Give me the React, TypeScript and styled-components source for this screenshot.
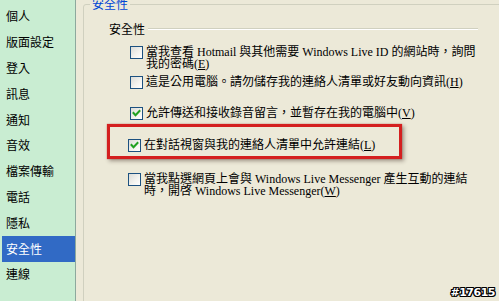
import React from "react";
import styled, { createGlobalStyle } from "styled-components";

const Global = createGlobalStyle`
  html, body { margin: 0; padding: 0; }
  body {
    background: #ece9d8;
    font-family: "Liberation Serif", "Noto Sans CJK TC", serif;
    font-size: 12px;
    overflow: hidden;
  }
`;

const Page = styled.div`
  position: relative;
  display: flex;
  width: 499px;
  height: 301px;
  overflow: hidden;
  background: #ece9d8;
`;

const Sidebar = styled.nav`
  flex: 0 0 auto;
  width: 76px;
  height: 100%;
  box-sizing: border-box;
  background: #c9edd2;
  border-right: 1px solid #8da99d;
  padding: 3.6px 0 0 2px;
  display: flex;
  flex-direction: column;
`;

const NavItem = styled.div<{ $active?: boolean }>`
  height: 25.8px;
  margin-right: 0px;
  padding-left: 4px;
  display: flex;
  align-items: center;
  font-family: "Noto Sans CJK TC", sans-serif;
  font-size: 12px;
  line-height: 12px;
  color: ${(p) => (p.$active ? "#ffffff" : "#000000")};
  background: ${(p) => (p.$active ? "#316ac5" : "transparent")};
`;

const Main = styled.main`
  flex: 1 1 auto;
  padding-left: 7px;
  min-width: 0;
`;

const GroupBox = styled.fieldset`
  margin: -3px -30px 0 0;
  padding: 0;
  border: 1px solid #d0d0bf;
  border-radius: 3px;
  height: 320px;
  box-sizing: border-box;
`;

const Legend = styled.legend`
  margin-left: 6px;
  padding: 0 2px;
  font-family: "Noto Sans CJK TC", sans-serif;
  font-size: 12px;
  line-height: 14px;
  color: #0046d5;
`;

const Heading = styled.div`
  display: flex;
  align-items: center;
  margin: 11px 0 0 25px;
  width: 369px;
  font-family: "Noto Sans CJK TC", sans-serif;
  font-size: 12px;
  line-height: 14px;
  color: #000;
`;

const Rule = styled.span`
  flex: 1;
  height: 0;
  margin-left: 3px;
  border-top: 1px solid #d0d0bf;
  border-bottom: 1px solid #ffffff;
`;

const List = styled.div`
  display: flex;
  flex-direction: column;
`;

const Row = styled.div<{ $top: number; $left?: number }>`
  display: flex;
  align-items: flex-start;
  gap: 3px;
  margin-top: ${(p) => p.$top}px;
  margin-left: ${(p) => p.$left ?? 46}px;
`;

const Label = styled.span`
  font-family: "Liberation Serif", "Noto Sans CJK TC", serif;
  font-size: 12px;
  line-height: 12px;
  color: #000;
  white-space: nowrap;
`;

const Box = styled.span`
  flex: 0 0 auto;
  width: 13px;
  height: 13px;
  box-sizing: border-box;
  border: 1px solid #1c5180;
  background: linear-gradient(135deg, #dcdcd7 0%, #f4f4f0 60%, #ffffff 100%);
  display: flex;
  align-items: center;
  justify-content: center;
`;

const Highlight = styled.div`
  margin: 4px 0 0 23px;
  width: 295px;
  height: 35px;
  box-sizing: border-box;
  border: 3px solid #d41f1f;
  box-shadow: 2px 2px 4px rgba(60, 40, 30, 0.45), 0 0 1px rgba(200, 0, 0, 0.6);
  padding: 12px 0 0 18px;
  display: flex;
`;

const InnerRow = styled.div`
  display: flex;
  align-items: flex-start;
  gap: 3px;
`;

const Watermark = styled.div`
  position: absolute;
  right: 4px;
  bottom: 2px;
  font-family: "DejaVu Sans", sans-serif;
  font-weight: bold;
  font-size: 11px;
  letter-spacing: -0.5px;
  color: #ffffff;
  text-shadow: 1px 0 0 #000, -1px 0 0 #000, 0 1px 0 #000, 0 -1px 0 #000,
    1px 1px 0 #000, -1px -1px 0 #000, 1px -1px 0 #000, -1px 1px 0 #000;
`;

const Check = ({ checked }: { checked?: boolean }) => (
  <Box>
    {checked && (
      <svg width="11" height="11" viewBox="0 0 11 11">
        <polyline
          points="2.5,5 4.5,7.2 8.5,3"
          fill="none"
          stroke="#21a121"
          strokeWidth="2"
          strokeLinecap="square"
        />
      </svg>
    )}
  </Box>
);

const navItems = ["個人", "版面設定", "登入", "訊息", "通知", "音效", "檔案傳輸", "電話", "隱私", "安全性", "連線"];

export default function App() {
  return (
    <Page>
      <Global />
      <Sidebar>
        {navItems.map((n) => (
          <NavItem key={n} $active={n === "安全性"}>
            {n}
          </NavItem>
        ))}
      </Sidebar>
      <Main>
        <GroupBox>
          <Legend>安全性</Legend>
          <Heading>
            安全性
            <Rule />
          </Heading>
          <List>
            <Row $top={10}>
              <Check />
              <Label>
                當我查看 Hotmail 與其他需要 Windows Live ID 的網站時，詢問
                <br />
                我的密碼(<u>E</u>)
              </Label>
            </Row>
            <Row $top={6}>
              <Check />
              <Label>
                這是公用電腦。請勿儲存我的連絡人清單或好友動向資訊(<u>H</u>)
              </Label>
            </Row>
            <Row $top={18}>
              <Check checked />
              <Label>
                允許傳送和接收錄音留言，並暫存在我的電腦中(<u>V</u>)
              </Label>
            </Row>
            <Highlight>
              <InnerRow>
                <Check checked />
                <Label>
                  在對話視窗與我的連絡人清單中允許連結(<u>L</u>)
                </Label>
              </InnerRow>
            </Highlight>
            <Row $top={14} $left={44}>
              <Check />
              <Label>
                當我點選網頁上會與 Windows Live Messenger 產生互動的連結
                <br />
                時，開啓 Windows Live Messenger(<u>W</u>)
              </Label>
            </Row>
          </List>
        </GroupBox>
      </Main>
      <Watermark>#17615</Watermark>
    </Page>
  );
}
